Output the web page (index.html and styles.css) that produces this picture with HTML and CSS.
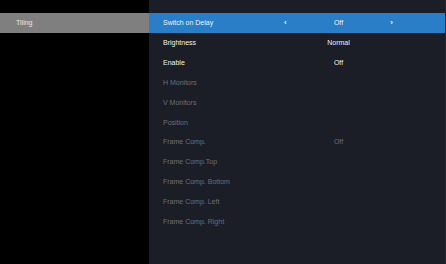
FILE: index.html
```html
<!DOCTYPE html>
<html lang="en">
<head>
    <meta charset="UTF-8">
    <meta name="viewport" content="width=device-width, initial-scale=1.0">
    <title>OSD Menu</title>
    <link rel="stylesheet" href="styles.css">
</head>
<body>
    <div class="sidebar">
        <div class="tab active">Tiling</div>
    </div>
    <div class="menu">
        <div class="row selected">
            <span class="label">Switch on Delay</span>
            <span class="control"><span class="arrow">&lsaquo;</span><span class="value">Off</span><span class="arrow">&rsaquo;</span></span>
        </div>
        <div class="row">
            <span class="label">Brightness</span>
            <span class="control"><span class="value">Normal</span></span>
        </div>
        <div class="row">
            <span class="label">Enable</span>
            <span class="control"><span class="value">Off</span></span>
        </div>
        <div class="row disabled"><span class="label">H Monitors</span></div>
        <div class="row disabled"><span class="label">V Monitors</span></div>
        <div class="row disabled"><span class="label">Position</span></div>
        <div class="row disabled">
            <span class="label">Frame Comp.</span>
            <span class="control"><span class="value">Off</span></span>
        </div>
        <div class="row disabled"><span class="label">Frame Comp.Top</span></div>
        <div class="row disabled"><span class="label">Frame Comp. Bottom</span></div>
        <div class="row disabled"><span class="label">Frame Comp. Left</span></div>
        <div class="row disabled"><span class="label">Frame Comp. Right</span></div>
    </div>
</body>
</html>
```
FILE: styles.css
```css
body {
    margin: 0;
    padding: 0;
    display: flex;
    height: 264px;
    background: #000;
    font-family: "Liberation Sans", Arial, sans-serif;
    font-size: 7px;
    color: #f2f2f2;
    overflow: hidden;
}

.sidebar {
    width: 149px;
    background: #000;
    padding-top: 13px;
}

.tab {
    height: 20px;
    line-height: 20px;
    padding-left: 16px;
    color: #e6e6e6;
}

.tab.active {
    background: #7f7f7f;
}

.menu {
    width: 296px;
    background: #1b1e27;
    padding-top: 13px;
    border-right: 1px solid #23262e;
}

.row {
    display: flex;
    align-items: center;
    height: 19.85px;
    padding-left: 14px;
}

.row.selected {
    background: #2a7dc7;
}

.label {
    width: 121px;
}

.control {
    display: flex;
    align-items: center;
    justify-content: center;
    width: 109px;
    position: relative;
}

.control .arrow {
    font-weight: bold;
    font-size: 8px;
}

.control .value {
    flex: 1;
    text-align: center;
}

.row.disabled {
    color: #6b6e77;
}
```
